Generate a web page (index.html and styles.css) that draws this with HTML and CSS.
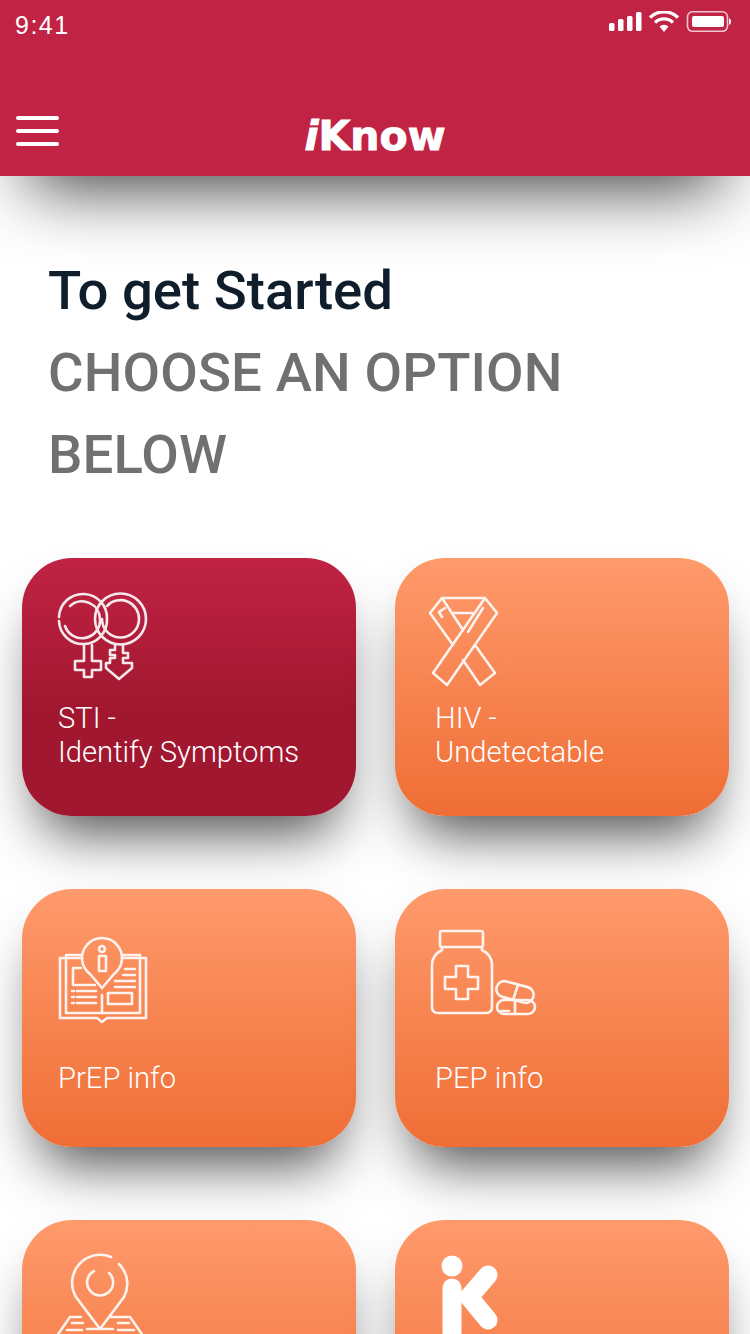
FILE: index.html
```html
<!DOCTYPE html>
<html lang="en">
<head>
    <meta charset="UTF-8">
    <meta name="viewport" content="width=device-width, initial-scale=1.0">
    <title>iKnow</title>
    <link rel="stylesheet" href="styles.css">
</head>
<body>
    <header class="topbar">
        <div class="status">
            <span class="clock">9:41</span>
            <svg class="status-icons" width="124" height="24" viewBox="0 0 124 24">
                <g fill="#fff">
                    <rect x="0" y="12" width="5.500" height="8" rx="1.500"/>
                    <rect x="9" y="8" width="5.500" height="12" rx="1.500"/>
                    <rect x="18" y="5" width="5.500" height="15" rx="1.500"/>
                    <rect x="27" y="1" width="5.500" height="19" rx="1.500"/>
                    <path d="M55 21l-4.500-5.500a6.500 6.500 0 0 1 9 0z"/>
                    <rect x="83" y="5" width="32" height="11" rx="2"/>
                    <path d="M120 7v7a4 4 0 0 0 0-7z"/>
                </g>
                <g fill="none" stroke="#fff">
                    <path d="M46 11.500a13 13 0 0 1 18 0" stroke-width="3.200"/>
                    <path d="M41 6.500a20 20 0 0 1 28 0" stroke-width="3.200"/>
                    <rect x="78.500" y="0.800" width="40" height="19.500" rx="5" stroke-width="1.600" opacity=".75"/>
                </g>
            </svg>
        </div>
        <nav class="navrow">
            <div class="burger"><span></span><span></span><span></span></div>
            <div class="logo"><i>i</i>Know</div>
        </nav>
    </header>

    <main class="content">
        <h1 class="title">To get Started</h1>
        <h2 class="subtitle">CHOOSE AN OPTION BELOW</h2>

        <section class="options">
            <a class="card card-red">
                <svg class="icon" viewBox="0 0 120 110">
                    <path d="M11 33A24 24 0 1 0 59 31A24 24 0 0 0 11 29"/>
                    <path d="M17 38a18 18 0 0 0 35-7a18 18 0 0 0-30-13"/>
                    <path d="M47 31a25.500 25.500 0 1 0 51 0a25.500 25.500 0 0 0-51 0"/>
                    <path d="M54 31a18.500 18.500 0 1 0 37 0a18.500 18.500 0 0 0-32-13"/>
                    <path d="M36 57V73H27V82H36V89H44V82H53V73H44V57"/>
                    <path d="M67 57V62H62V67H67V70H62V75H58V80L71 91L84 80V75H75V70H80V65H75V57"/>
                </svg>
                <span class="label">STI -<br>Identify Symptoms</span>
            </a>

            <a class="card">
                <svg class="icon" viewBox="0 0 120 110">
                    <path d="M60 10L72 25L22 97L8 85Z"/>
                    <path d="M38 42L17 10H60M28 57L5 25L17 10"/>
                    <path d="M38 72L55 97L70 85L50 57"/>
                    <path d="M28 25H48M58 20L43 44M20 20L14 24L17 29"/>
                </svg>
                <span class="label">HIV -<br>Undetectable</span>
            </a>

            <a class="card">
                <svg class="icon" viewBox="0 0 120 110">
                    <path d="M34 39H12V99H49L54 103L59 99H98V39H74"/>
                    <path d="M34 36H18V94H92V36H74"/>
                    <path d="M42 55A20 20 0 1 1 66 55L54 69Z"/>
                    <circle cx="54" cy="30" r="3"/>
                    <rect x="51" y="37" width="7" height="15"/>
                    <path d="M54 76V94M33 49H25V66H47"/>
                    <path d="M24 72H26M29 72H48M24 78H26M29 78H48M24 84H26M29 84H48"/>
                    <path d="M77 50H87M75 56H87M67 62H87M67 68H87"/>
                    <rect x="60" y="74" width="24" height="11"/>
                </svg>
                <span class="label label-single">PrEP info</span>
            </a>

            <a class="card">
                <svg class="icon" viewBox="0 0 120 110">
                    <rect x="15" y="12" width="43" height="16" rx="2"/>
                    <path d="M17 29V31Q7 36 7 46V88Q7 94 13 94H61Q67 94 67 88V46Q67 36 57 31V29"/>
                    <path d="M31 47H43V58H53V70H43V80H31V70H20V58H31Z"/>
                    <rect x="71" y="65" width="38" height="16" rx="8" transform="rotate(15 90 73)"/>
                    <path d="M93 66L88 81"/>
                    <rect x="72" y="81" width="38" height="14" rx="7"/>
                    <path d="M90 81V95M76 92H84"/>
                </svg>
                <span class="label label-single">PEP info</span>
            </a>

            <a class="card">
                <svg class="icon" viewBox="0 0 120 110">
                    <path d="M63 7A28 28 0 0 0 28 47L52 79L76 47A28 28 0 0 0 71 14"/>
                    <path d="M46 21A13 13 0 1 0 61 23"/>
                    <path d="M39 79H65"/>
                    <path d="M33 67H22L6 90M63 67H82L98 90"/>
                    <path d="M24 73H35M19 80H34M70 73H81M70 80H86"/>
                </svg>
            </a>

            <a class="card">
                <svg class="icon icon-solid" viewBox="0 0 120 110">
                    <circle cx="27" cy="16" r="10.500"/>
                    <path d="M27 38V85"/>
                    <path d="M63 25L44 47L63 70"/>
                </svg>
            </a>
        </section>
    </main>
</body>
</html>
```

FILE: styles.css
```css
html, body {
    margin: 0;
    height: 1334px;
    overflow: hidden;
    background: #fff;
}
body {
    font-family: Roboto, sans-serif;
}
.topbar {
    position: relative;
    height: 176px;
    background: #c02344;
    box-shadow: 0 40px 70px -30px rgba(0, 0, 0, 0.8);
}
.status {
    display: flex;
    justify-content: space-between;
    padding: 10px 17px 0 15px;
    height: 35px;
}
.clock {
    color: #fff;
    font-family: "Liberation Sans", sans-serif;
    font-size: 25px;
    line-height: 30px;
    letter-spacing: 1.500px;
}
.status-icons {
    margin-top: 1px;
}
.navrow {
    position: relative;
    display: flex;
    justify-content: center;
    padding-top: 66px;
}
.burger {
    position: absolute;
    left: 16px;
    top: 71px;
    width: 43px;
    display: flex;
    flex-direction: column;
    gap: 9px;
}
.burger span {
    height: 4px;
    border-radius: 2px;
    background: #fff;
}
.logo {
    color: #fff;
    font-family: "DejaVu Sans", sans-serif;
    font-weight: 700;
    font-size: 41px;
    line-height: 50px;
    -webkit-text-stroke: 1px #fff;
}
.content {
    padding: 73px 22px 0 22px;
}
.title, .subtitle {
    margin: 0;
    padding-left: 26px;
    font-size: 54.500px;
    line-height: 82px;
    font-weight: 500;
}
.title {
    color: #101e2c;
}
.subtitle {
    width: 600px;
    color: #707070;
    letter-spacing: 0.150px;
}
.options {
    display: grid;
    grid-template-columns: 334px 334px;
    column-gap: 39px;
    row-gap: 73px;
    margin-top: 63px;
}
.card {
    display: block;
    height: 258px;
    box-sizing: border-box;
    padding: 30px 0 0 36px;
    border-radius: 50px;
    color: #fff;
    background: linear-gradient(#ff9a6c, #ef6e35);
    box-shadow: 0 35px 55px -18px rgba(0, 0, 0, 0.7);
}
.card:nth-child(even) {
    padding-left: 40px;
}
.card-red {
    background: linear-gradient(#c02344, #a1172f 60%);
}
.icon {
    display: block;
    width: 120px;
    height: 110px;
    margin-left: -10px;
    fill: none;
    stroke: #fff;
    stroke-width: 2.600;
    stroke-linecap: round;
    stroke-linejoin: round;
    opacity: 0.9;
}
.icon-solid {
    stroke-width: 19;
    opacity: 1;
}
.icon-solid circle {
    fill: #fff;
    stroke: none;
}
.label {
    display: block;
    margin-top: 3px;
    font-size: 29.200px;
    font-weight: 300;
    line-height: 34px;
}
.label-single {
    padding-top: 29px;
}
```
